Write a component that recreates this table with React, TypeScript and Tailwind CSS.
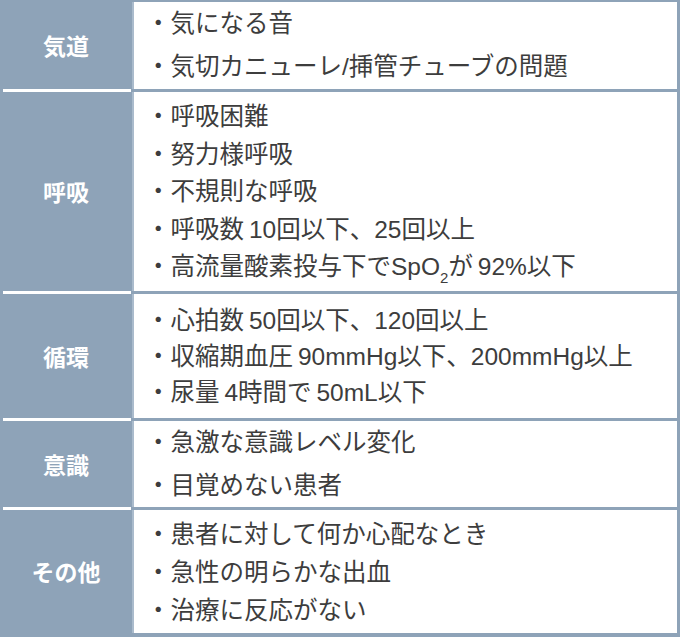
import React from 'react';

type Row = { label: string; height: string; leading: string; items: React.ReactNode[] };

// thin gap between kanji and numerals, like the original typesetting
const s = '\u2009';

const rows: Row[] = [
  {
    label: '気道',
    height: 'h-[87px]',
    leading: 'leading-[43px] pb-[2px]',
    items: ['気になる音', '気切カニューレ/挿管チューブの問題'],
  },
  {
    label: '呼吸',
    height: 'h-[199px]',
    leading: 'leading-[37.5px] pt-[1px]',
    items: [
      '呼吸困難',
      '努力様呼吸',
      '不規則な呼吸',
      `呼吸数${s}10回以下、25回以上`,
      <>
        高流量酸素投与下でSpO<sub className="text-[15px] align-[-4px]">2</sub>が{s}92%以下
      </>,
    ],
  },
  {
    label: '循環',
    height: 'h-[124px]',
    leading: 'leading-[36px] pt-[1px]',
    items: [`心拍数${s}50回以下、120回以上`, `収縮期血圧${s}90mmHg以下、200mmHg以上`, `尿量${s}4時間で${s}50mL以下`],
  },
  {
    label: '意識',
    height: 'h-[86px]',
    leading: 'leading-[43px] pb-[1px]',
    items: ['急激な意識レベル変化', '目覚めない患者'],
  },
  {
    label: 'その他',
    height: 'h-[123px]',
    leading: 'leading-[38px] pt-[2px]',
    items: ['患者に対して何か心配なとき', '急性の明らかな出血', '治療に反応がない'],
  },
];

const App: React.FC = () => {
  return (
    <div
      className="w-[680px] h-[637px] bg-[#8ea3b8] pt-[2px] pr-[3px] flex flex-col"
      style={{ fontFamily: '"Liberation Sans", "Noto Sans CJK JP", sans-serif' }}
    >
      {rows.map((row, i) => (
        <React.Fragment key={row.label}>
          {i > 0 && (
            <div className="h-[3px] flex">
              <div className="ml-[3px] w-[128px] bg-white" />
            </div>
          )}
          <div className={`flex ${row.height}`}>
            {/* label */}
            <div
              className="w-[132px] flex items-center justify-center text-white font-bold text-[23px]"
              style={{ fontFamily: '"Noto Sans CJK JP", sans-serif' }}
            >
              {row.label}
            </div>
            {/* items */}
            <div
              className={`flex-1 bg-white border-l-2 border-[#aabbcc] pl-[12px] flex flex-col justify-center text-[#3d3d3d] text-[24.5px] ${row.leading}`}
            >
              {row.items.map((item, j) => (
                <div key={j} className="whitespace-nowrap">
                  ・{item}
                </div>
              ))}
            </div>
          </div>
        </React.Fragment>
      ))}
    </div>
  );
};

export default App;
